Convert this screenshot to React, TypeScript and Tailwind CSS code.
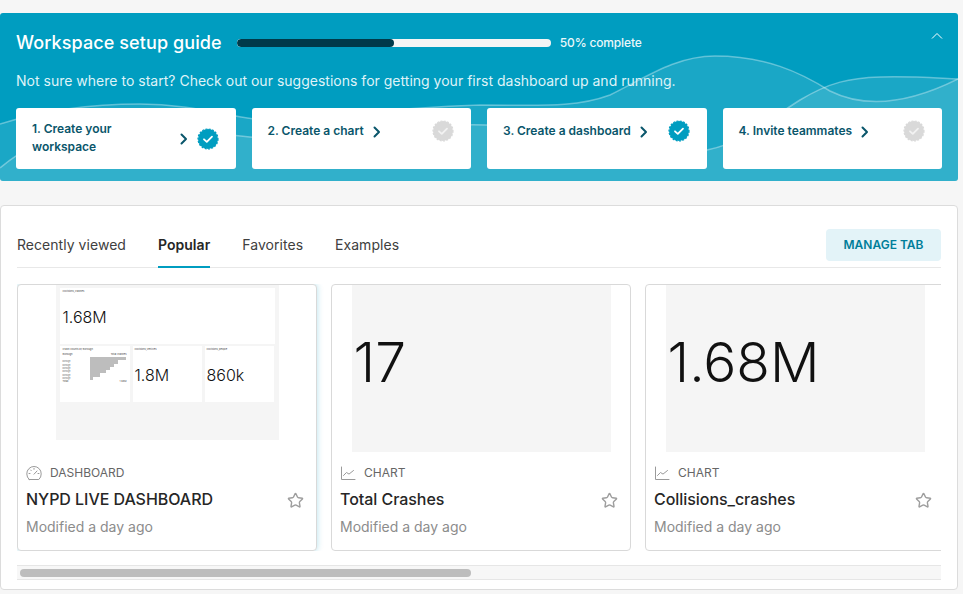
import React from "react";
import { Star } from "lucide-react";

const Check = ({ on }: { on: boolean }) => (
  <svg width="22" height="22" viewBox="0 0 22 22" className="shrink-0">
    <circle cx="11" cy="11" r="10" fill={on ? "#009dc0" : "#d9d9d9"} />
    <circle cx="11" cy="11" r="10" fill="none" stroke={on ? "#009dc0" : "#d9d9d9"} strokeWidth="1.2" strokeDasharray="2 1.4" />
    <path d="M7 11.3l2.8 2.6L15 8.6" fill="none" stroke={on ? "#ffffff" : "#f2f2f2"} strokeWidth="1.8" strokeLinecap="round" strokeLinejoin="round" />
  </svg>
);

const Chevron = () => (
  <svg width="8" height="12" viewBox="0 0 8 12" className="shrink-0">
    <path d="M1.5 1.5L6 6l-4.5 4.5" fill="none" stroke="#0a566b" strokeWidth="2" strokeLinecap="round" strokeLinejoin="round" />
  </svg>
);

const Gauge = () => (
  <svg width="16" height="16" viewBox="0 0 16 16" fill="none" stroke="#9a9a9a" strokeWidth="1" strokeLinecap="round">
    <path d="M3.2 14.5h9.6a7.4 7.4 0 0 0 2.4-5.6A7.2 7.2 0 0 0 8 1.5 7.2 7.2 0 0 0 .8 8.9a7.4 7.4 0 0 0 2.4 5.6z" />
    <path d="M8 9.2l3-3.2M3 8.5h1M12 8.5h1M4.6 5l.6.6M8 3.4v.9" />
  </svg>
);

const LineIcon = () => (
  <svg width="16" height="16" viewBox="0 0 16 16" fill="none" stroke="#9a9a9a" strokeWidth="1" strokeLinecap="round" strokeLinejoin="round">
    <path d="M1.5 2v12.5H15" />
    <path d="M3.5 10.5l3-3 2.5 1.6 4.5-3.6" />
  </svg>
);

const steps = [
  { label: "1. Create your workspace", on: true, two: true },
  { label: "2. Create a chart", on: false, two: false },
  { label: "3. Create a dashboard", on: true, two: false },
  { label: "4. Invite teammates", on: false, two: false },
];

const StepCard = ({ s }: { s: (typeof steps)[number] }) =>
  s.two ? (
    <div className="flex-1 h-[61px] bg-white rounded-[3px] flex items-center pl-4 pr-[17px]">
      <span className="w-[112px] mb-[2px] text-[12px] leading-[18px] font-semibold text-[#0a566b]">{s.label}</span>
      <span className="ml-auto mr-[9px]"><Chevron /></span>
      <Check on={s.on} />
    </div>
  ) : (
    <div className="flex-1 h-[61px] bg-white rounded-[3px] flex items-start pl-4 pr-[17px] pt-3">
      <span className="text-[12px] leading-[22px] font-semibold text-[#0a566b]">{s.label}</span>
      <span className="ml-[9px] mt-[6px]"><Chevron /></span>
      <span className="ml-auto"><Check on={s.on} /></span>
    </div>
  );

const Tiny = ({ children }: { children: React.ReactNode }) => (
  <div className="text-[2.5px] leading-[4px] text-[#444] whitespace-nowrap">{children}</div>
);

const bars = [36, 28, 24, 20, 16, 10, 3];

const DashThumb = () => (
  <div className="w-[223px] h-[155px] bg-[#f5f5f5] px-1 pt-[3px] flex flex-col gap-[2px]">
    <div className="h-[56px] bg-white px-[3px] pt-[2px]">
      <Tiny>Collisions_crashes</Tiny>
      <div className="text-[16px] leading-[20px] mt-[13px] font-light text-[#111]">1.68M</div>
    </div>
    <div className="h-[56px] flex gap-[3px]">
      <div className="w-[70px] bg-white px-[3px] pt-[2px]">
        <Tiny>Crash Counts by Borough</Tiny>
        <div className="flex justify-between mt-[1px]"><Tiny>Borough</Tiny><Tiny>Total crashes</Tiny></div>
        <div className="flex flex-col">
          {bars.map((w, i) => (
            <div key={w} className="h-[3.3px] flex items-center">
              <div className="w-[27px] text-[2px] leading-[3px] text-[#666]">{i > 0 ? "borough" : ""}</div>
              <div className="h-full bg-[#bdbdbd]" style={{ width: `${w}px` }} />
            </div>
          ))}
        </div>
        <div className="flex justify-between"><Tiny>Total</Tiny><Tiny>1.68M</Tiny></div>
      </div>
      <div className="w-[69px] bg-white px-[2px] pt-[2px]">
        <Tiny>Collisions_vehicles</Tiny>
        <div className="text-[16px] leading-[20px] mt-[13px] font-light text-[#111]">1.8M</div>
      </div>
      <div className="w-[69px] bg-white px-[2px] pt-[2px]">
        <Tiny>Collisions_people</Tiny>
        <div className="text-[16px] leading-[20px] mt-[13px] font-light text-[#111]">860k</div>
      </div>
    </div>
  </div>
);

const ChartThumb = ({ value }: { value: string }) => (
  <div className="w-[259px] h-[167px] bg-[#f5f5f5] flex items-center pl-[2px]">
    <span className="text-[55px] leading-none font-light text-[#111] mb-[12px]">{value}</span>
  </div>
);

const Card = ({
  type, title, thumb, active, icon, imageH,
}: { type: string; title: string; thumb: React.ReactNode; active?: boolean; icon: React.ReactNode; imageH: string }) => (
  <div
    className={`w-[300px] h-[267px] shrink-0 rounded-[4px] border border-[#d9d9d9] bg-white flex flex-col ${active ? "shadow-[0_0_6px_rgba(0,157,192,0.3)]" : ""}`}
  >
    <div className={`${imageH} flex justify-center`}>{thumb}</div>
    <div className="mt-auto px-2 pb-[13px]">
      <div className="flex items-center gap-2 h-4 text-[12px] text-[#666]">
        {icon}
        <span>{type}</span>
      </div>
      <div className="flex items-center justify-between mt-[6px] pr-[4px]">
        <span className="text-[16px] leading-6 font-medium tracking-[-0.05px] text-[#262626]">{title}</span>
        <Star size={17} strokeWidth={2} className="text-[#9e9e9e] mt-[2px]" />
      </div>
      <div className="text-[14px] leading-5 mt-[6px] text-[#8c8c8c]">Modified a day ago</div>
    </div>
  </div>
);

export default function App() {
  return (
    <div className="w-[963px] h-[594px] overflow-hidden bg-[#f6f6f6] pt-[13px] font-['Inter',sans-serif]">
      <section className="relative w-[958px] h-[168px] rounded-[3px] overflow-hidden bg-[#009dc0]">
        <svg className="absolute inset-0" width="958" height="168" viewBox="0 13 958 168">
          <path d="M0 124C45 110 90 104 140 104C190 104 225 116 262 120C320 124 360 108 480 105C540 105 575 108 610 95C645 78 675 56 715 56C765 56 800 72 830 91C860 106 900 108 958 79V181H0Z" fill="#ffffff" fillOpacity="0.1" />
          <path d="M0 168C10 160 18 153 30 150C90 140 170 128 250 137C330 145 410 122 487 125C560 128 640 160 707 150C745 142 765 122 800 100C830 82 850 78 880 77C910 76 935 78 958 79V181H0Z" fill="#ffffff" fillOpacity="0.1" />
          <path d="M0 124C45 110 90 104 140 104C190 104 225 116 262 120C320 124 360 108 480 105C540 105 575 108 610 95C645 78 675 56 715 56C765 56 800 72 830 91C860 106 900 108 958 79" fill="none" stroke="#ffffff" strokeOpacity="0.35" strokeWidth="1.5" />
          <path d="M0 168C10 160 18 153 30 150C90 140 170 128 250 137C330 145 410 122 487 125C560 128 640 160 707 150C745 142 765 122 800 100C830 82 850 78 880 77C910 76 935 78 958 79" fill="none" stroke="#ffffff" strokeOpacity="0.35" strokeWidth="1.5" />
        </svg>
        <div className="relative h-full px-4 pt-[18px]">
          <div className="flex items-center h-6">
            <h1 className="text-[18px] leading-6 font-medium text-white tracking-[0.1px]">Workspace setup guide</h1>
            <div className="ml-[15px] w-[314px] h-2 rounded-full bg-[#f5f5f5] overflow-hidden">
              <div className="w-1/2 h-full rounded-full bg-[#003a4a]" />
            </div>
            <span className="ml-[9px] text-[12px] font-medium tracking-[-0.15px] text-[#eaf7fa]">50% complete</span>
            <svg className="ml-auto mb-[14px] mr-[-1px]" width="12" height="8" viewBox="0 0 12 8">
              <path d="M1 6.5L6 1.5l5 5" fill="none" stroke="#fff" strokeWidth="1" />
            </svg>
          </div>
          <p className="mt-[16px] text-[14px] leading-5 tracking-[0.01px] text-[#dff3f8]">
            Not sure where to start? Check out our suggestions for getting your first dashboard up and running.
          </p>
          <div className="mt-[17px] flex gap-4">
            {steps.map((s) => <StepCard key={s.label} s={s} />)}
          </div>
        </div>
      </section>

      <section className="mt-[24px] w-[958px] h-[385px] rounded-[4px] border border-[#dcdcdc] bg-white px-4">
        <div className="flex items-end h-[62px] border-b border-[#e8e8e8]">
          <div className="flex gap-8 text-[14px] text-[#404040] tracking-[0.04px]">
            <span className="h-[33px]">Recently viewed</span>
            <span className="relative h-[33px] font-semibold text-[#262626]">
              Popular
              <span className="absolute left-0 right-0 bottom-[-1px] h-[2px] bg-[#009dc0]" />
            </span>
            <span className="h-[33px]">Favorites</span>
            <span className="h-[33px]">Examples</span>
          </div>
          <button className="ml-auto mb-[6px] w-[115px] h-8 rounded-[4px] bg-[#e3f3f8] text-[12px] font-semibold text-[#007e9a]">
            MANAGE TAB
          </button>
        </div>
        <div className="mt-4 flex gap-[14px] overflow-hidden w-[924px] py-0">
          <Card type="DASHBOARD" title="NYPD LIVE DASHBOARD" thumb={<DashThumb />} active icon={<Gauge />} imageH="h-[155px]" />
          <Card type="CHART" title="Total Crashes" thumb={<ChartThumb value="17" />} icon={<LineIcon />} imageH="h-[167px]" />
          <Card type="CHART" title="Collisions_crashes" thumb={<ChartThumb value="1.68M" />} icon={<LineIcon />} imageH="h-[167px]" />
        </div>
        <div className="mt-[14px] h-[15px] w-[924px] bg-[#f7f7f7] border-y border-[#e6e6e6] flex items-center px-[3px]">
          <div className="w-[451px] h-2 rounded-full bg-[#bdbdbd]" />
        </div>
      </section>
    </div>
  );
}
